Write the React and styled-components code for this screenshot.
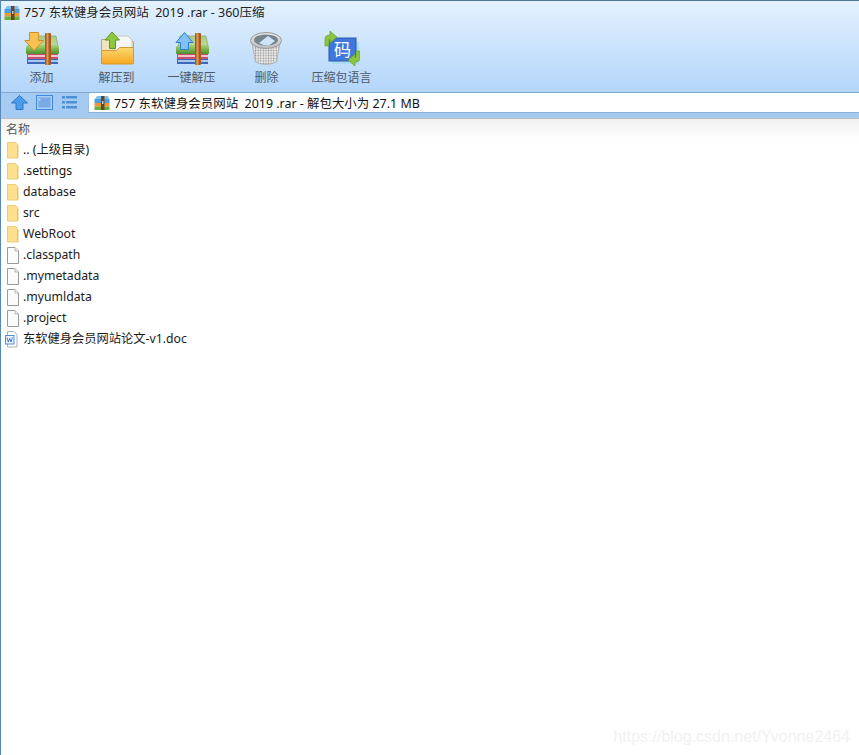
import styled, { createGlobalStyle } from "styled-components"

const GlobalStyle = createGlobalStyle`
  html, body {
    margin: 0;
    padding: 0;
    height: 100%;
    background: #fff;
  }
  #root {
    height: 100%;
  }
`

const Window = styled.main`
  position: relative;
  height: 755px;
  overflow: hidden;
  box-sizing: border-box;
  background: #fff;
  border-left: 1px solid #5688b8;
  border-top: 1px solid #4f7396;
  font-family: "Noto Sans", "Noto Sans CJK SC", sans-serif;
  font-size: 12.25px;
  color: #1a1a1a;
`

const Chrome = styled.header`
  height: 92px;
  box-sizing: border-box;
  border-bottom: 1px solid #82a9d2;
  background: linear-gradient(#e4f1fe, #b3d6fa);
`

const TitleBar = styled.div`
  display: flex;
  align-items: center;
  gap: 4px;
  height: 24px;
  line-height: 24px;
  padding-left: 3px;
  font-size: 12.5px;
  color: #222;
  white-space: pre;
`

const Toolbar = styled.nav`
  display: flex;
  align-items: flex-start;
  padding-left: 3px;
`

const ToolButton = styled.div`
  display: flex;
  flex-direction: column;
  align-items: center;
  flex: none;
  width: 75px;
  color: #4e5a66;
  font-size: 12px;
`

const ToolIcon = styled.div`
  height: 42px;
  display: flex;
  align-items: flex-end;
  margin-bottom: 1px;
`

const AddressRow = styled.div`
  display: flex;
  align-items: flex-start;
  height: 26px;
  box-sizing: border-box;
  background: #a6cbf2;
  border-bottom: 1px solid #bdbdbd;
`

const NavIcons = styled.div`
  display: flex;
  align-items: center;
  gap: 8px;
  width: 87px;
  height: 18px;
  flex: none;
  padding-left: 10px;
  box-sizing: border-box;
`

const AddressBox = styled.div`
  flex: 1;
  display: flex;
  align-items: center;
  gap: 4px;
  height: 20px;
  box-sizing: border-box;
  padding-left: 5px;
  background: #fff;
  color: #111;
  font-size: 12.45px;
  border-left: 1px solid #9dbfe3;
  border-bottom: 1px solid #8db0d6;
  border-top-left-radius: 2px;
  white-space: pre;
`

const ListHeader = styled.div`
  height: 20px;
  padding-left: 5px;
  display: flex;
  align-items: center;
  color: #555;
  font-size: 12px;
  background: linear-gradient(#f1f1f1, #fff);
`

const FileList = styled.ul`
  list-style: none;
  margin: 0;
  padding: 0;
`

const FileRow = styled.li`
  display: flex;
  align-items: center;
  gap: 4px;
  height: 21px;
  line-height: 21px;
  padding-left: 4px;
  white-space: pre;
`

const Watermark = styled.div`
  position: absolute;
  right: 9px;
  bottom: 9px;
  color: #f1f1f1;
  font-family: "Liberation Sans", sans-serif;
  font-size: 16px;
`

const Archive = () => (
  <svg width="16" height="16" viewBox="0 0 16 16">
    <path d="M1 4 3 1h11l1 3z" fill="#7fc0ee" />
    <rect x="0.5" y="4" width="15" height="4" fill="#4f9fe0" />
    <rect x="0.5" y="8" width="15" height="3.5" fill="#ea9a34" />
    <rect x="0.5" y="11.5" width="15" height="3.5" fill="#6aae3c" />
    <rect x="7" y="1" width="3.5" height="14" fill="#6d4526" />
    <rect x="8" y="6" width="1.4" height="3" fill="#e8c79a" />
  </svg>
)

const Books = ({ arrow }) => (
  <svg width="36" height="36" viewBox="0 0 36 36">
    <defs>
      <linearGradient id={`cover-${arrow}`} x1="0" y1="0" x2="0" y2="1">
        <stop offset="0" stopColor="#9fd069" />
        <stop offset="1" stopColor="#4c8f2c" />
      </linearGradient>
      <linearGradient id={`top-${arrow}`} x1="0" y1="0" x2="0" y2="1">
        <stop offset="0" stopColor="#a9c98a" />
        <stop offset="1" stopColor="#b9dc96" />
      </linearGradient>
    </defs>
    <path d="M6 5h26l2 10H4z" fill={`url(#top-${arrow})`} stroke="#7d9c5c" strokeWidth=".6" />
    <rect x="2" y="15" width="33" height="8" rx="1" fill={`url(#cover-${arrow})`} />
    <rect x="3" y="23" width="31" height="5" fill="#c9506a" />
    <rect x="4" y="24" width="30" height="2" fill="#f3c3cd" />
    <rect x="3" y="28" width="31" height="5" fill="#3d68bc" />
    <rect x="4" y="29" width="30" height="2" fill="#a9c6ef" />
    <rect x="21" y="2" width="6" height="32" rx="1" fill="#a9581f" />
    <rect x="22.5" y="2" width="2" height="32" fill="#dc9a55" />
    {arrow === "down" ? (
      <path d="M5.5 1.5h9v8h5L10 19.5.8 9.5h4.7z" fill="#f8c252" stroke="#cf9128" />
    ) : (
      <path d="M6.5 18.5v-7H2L10.5 1.5 19 11.5h-4.5v7z" fill="#83c0f7" stroke="#2f7fd0" />
    )}
  </svg>
)

const FolderBig = () => (
  <svg width="36" height="36" viewBox="0 0 36 36">
    <defs>
      <linearGradient id="folderFront" x1="0" y1="0" x2="0" y2="1">
        <stop offset="0" stopColor="#ffd874" />
        <stop offset="1" stopColor="#f6a71e" />
      </linearGradient>
    </defs>
    <path d="M2.5 8.5h11l2 2h19v22h-32z" fill="#f0e4bd" stroke="#b9a873" />
    <path d="M16 5h13l4 4v11H16z" fill="#f6f6f6" stroke="#c6c6c6" />
    <path d="M2.5 19.5h15l3-3h14v15a1.500 1.500 0 0 1-1.500 1.500H4a1.500 1.500 0 0 1-1.500-1.500z" fill="url(#folderFront)" stroke="#d39a35" />
    <path d="M10.500 17.500V9H6l7-8 7.500 8H16.500v8.500z" fill="#8dc83f" stroke="#5b9a2a" />
  </svg>
)

const Trash = () => (
  <svg width="36" height="36" viewBox="0 0 36 36">
    <defs>
      <pattern id="mesh" width="2.6" height="2.6" patternUnits="userSpaceOnUse">
        <rect width="2.6" height="2.6" fill="#ececec" />
        <circle cx="1.3" cy="1.3" r=".8" fill="#8b8b8b" />
      </pattern>
      <linearGradient id="rim" x1="0" y1="0" x2="0" y2="1">
        <stop offset="0" stopColor="#e6e6e6" />
        <stop offset="1" stopColor="#bdbdbd" />
      </linearGradient>
    </defs>
    <path d="M3 12 6.500 31q10.500 5 21 0L31 12z" fill="url(#mesh)" stroke="#b3b3b3" />
    <ellipse cx="17" cy="9.500" rx="15.500" ry="8" fill="url(#rim)" stroke="#9a9a9a" />
    <ellipse cx="17" cy="9" rx="12" ry="5.500" fill="#75838d" />
    <path d="M10 12 19 5l7 5-6 4.500q-6 0-10-2.500z" fill="#cfe4f7" />
  </svg>
)

const CodeIcon = () => (
  <svg width="36" height="36" viewBox="0 0 36 36">
    <rect x="8" y="11" width="27" height="22" fill="#a9dcf5" />
    <rect x="5" y="7" width="27" height="23" fill="#3f78dc" stroke="#2a58aa" />
    <text x="18.500" y="24.500" textAnchor="middle" fontSize="17" fill="#fff" fontFamily="Noto Sans CJK SC">码</text>
    <g fill="#8cc63f" stroke="#5c962a" strokeWidth=".6">
      <path d="M1 15V8q0-4 5-4V0l7 6-7 6V8q-1 0-1 3v4z" />
      <path d="M36 20v7q0 4-5 4v4l-7-6 7-6v4q1 0 1-3v-4z" />
    </g>
  </svg>
)

const UpArrow = () => (
  <svg width="17" height="15" viewBox="0 0 17 15">
    <path d="M8.500.5 16.500 8H12v6.500H5V8H.5z" fill="#4a9bec" stroke="#2f76c4" />
  </svg>
)

const PaneIcon = () => (
  <svg width="17" height="15" viewBox="0 0 17 15">
    <rect x=".5" y=".5" width="16" height="14" fill="#a9cdf4" stroke="#3d8ae0" />
    <rect x="2.500" y="2.500" width="12" height="10" fill="#7aaae6" />
    <rect x="3" y="4" width="1.400" height="1.400" fill="#dcebfb" />
  </svg>
)

const ListIcon = () => (
  <svg width="17" height="15" viewBox="0 0 17 15">
    <g fill="#4e8fd6">
      <rect x="1" y="1" width="3" height="2.500" />
      <rect x="5" y="1" width="11" height="2.500" />
      <rect x="1" y="6" width="3" height="2.500" />
      <rect x="5" y="6" width="11" height="2.500" />
      <rect x="1" y="11" width="3" height="2.500" />
      <rect x="5" y="11" width="11" height="2.500" />
    </g>
  </svg>
)

const Folder = () => (
  <svg width="14" height="18" viewBox="0 0 14 18">
    <path d="M2.500 1.500h8l2.500 2.500v13H2.500z" fill="#fee08f" stroke="#eccb7c" />
    <path d="M12 4.500v12h1V5z" fill="#e6c26e" />
  </svg>
)

const Page = () => (
  <svg width="14" height="18" viewBox="0 0 14 18">
    <path d="M2.500 1.500h7.500l3.500 3.500v12.500h-11z" fill="#fbfbfb" stroke="#9a9a9a" />
    <path d="M10 1.500V5h3.500" fill="#eee" stroke="#b8b8b8" />
  </svg>
)

const DocFile = () => (
  <svg width="14" height="18" viewBox="0 0 14 18">
    <path d="M2.500 1.500h6.500l3 3v12.500h-9.500z" fill="#fff" stroke="#a6b2c2" />
    <rect x=".5" y="5.500" width="8.500" height="8.500" fill="#eaf2fc" stroke="#4f8ee0" />
    <path d="M2 7.500 3.300 12 4.700 8.500 6 12l1.300-4.500" fill="none" stroke="#2f72cc" strokeWidth=".9" />
  </svg>
)

const tools = [
  { label: "添加", icon: <Books arrow="down" /> },
  { label: "解压到", icon: <FolderBig /> },
  { label: "一键解压", icon: <Books arrow="up" /> },
  { label: "删除", icon: <Trash /> },
  { label: "压缩包语言", icon: <CodeIcon /> },
]

const files = [
  { name: ".. (上级目录)", icon: <Folder /> },
  { name: ".settings", icon: <Folder /> },
  { name: "database", icon: <Folder /> },
  { name: "src", icon: <Folder /> },
  { name: "WebRoot", icon: <Folder /> },
  { name: ".classpath", icon: <Page /> },
  { name: ".mymetadata", icon: <Page /> },
  { name: ".myumldata", icon: <Page /> },
  { name: ".project", icon: <Page /> },
  { name: "东软健身会员网站论文-v1.doc", icon: <DocFile /> },
]

const App = () => (
  <>
    <GlobalStyle />
    <Window>
      <Chrome>
        <TitleBar>
          <Archive />
          757 东软健身会员网站  2019 .rar - 360压缩
        </TitleBar>
        <Toolbar>
          {tools.map((tool) => (
            <ToolButton key={tool.label}>
              <ToolIcon>{tool.icon}</ToolIcon>
              {tool.label}
            </ToolButton>
          ))}
        </Toolbar>
      </Chrome>
      <AddressRow>
        <NavIcons>
          <UpArrow />
          <PaneIcon />
          <ListIcon />
        </NavIcons>
        <AddressBox>
          <Archive />
          757 东软健身会员网站  2019 .rar - 解包大小为 27.1 MB
        </AddressBox>
      </AddressRow>
      <ListHeader>名称</ListHeader>
      <FileList>
        {files.map((file) => (
          <FileRow key={file.name}>
            {file.icon}
            {file.name}
          </FileRow>
        ))}
      </FileList>
      <Watermark>https://blog.csdn.net/Yvonne2464</Watermark>
    </Window>
  </>
)

export default App
